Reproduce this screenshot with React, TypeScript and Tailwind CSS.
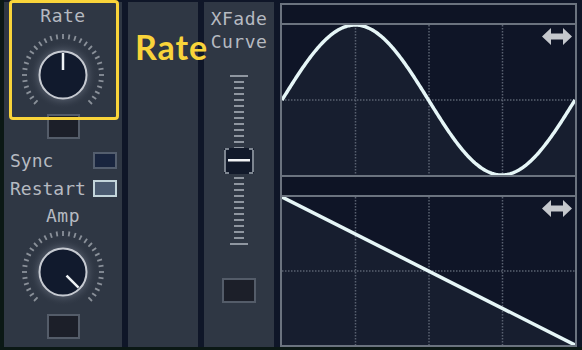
import React from 'react'

const mono = "font-['DejaVu_Sans_Mono','Liberation_Mono',monospace]"

function Knob({ angle, id }: { angle: number; id: string }) {
  const cx = 48
  const cy = 42
  const pt = (a: number, r: number) => {
    const t = (a * Math.PI) / 180
    return [cx + r * Math.sin(t), cy - r * Math.cos(t)]
  }
  const ticks = Array.from({ length: 31 }, (_, i) => -135 + i * 9)
  const [x1, y1] = pt(angle, 5)
  const [x2, y2] = pt(angle, 22)
  return (
    <svg width={96} height={80} className="block">
      <defs>
        <radialGradient id={id} cx="50%" cy="50%" r="50%">
          <stop offset="0.7" stopColor="#4b5361" />
          <stop offset="1" stopColor="#2f3744" stopOpacity="0" />
        </radialGradient>
      </defs>
      <circle cx={cx} cy={cy} r={34} fill={`url(#${id})`} />
      {ticks.map((a) => {
        const [ax, ay] = pt(a, 36)
        const [bx, by] = pt(a, 41)
        return <line key={a} x1={ax} y1={ay} x2={bx} y2={by} stroke="#8a9099" strokeWidth={1.8} />
      })}
      <circle cx={cx} cy={cy} r={23.5} fill="#111a2d" stroke="#c6cad1" strokeWidth={2} />
      <line x1={x1} y1={y1} x2={x2} y2={y2} stroke="#eef2f4" strokeWidth={2.5} />
    </svg>
  )
}

function ValueBox({ w = 33 }: { w?: number }) {
  return (
    <div
      className={`h-[25px] bg-[#1c1f29] border-2 border-[#545c69] ${w === 33 ? 'w-[33px]' : 'w-[34px]'}`}
    />
  )
}

function Arrow() {
  return (
    <path
      d="M260,11.5 L269,3 L269,8.5 L281,8.5 L281,3 L290,11.5 L281,20 L281,14.5 L269,14.5 L269,20 Z"
      fill="#c5c8cd"
    />
  )
}

function Grid({ h }: { h: number }) {
  return (
    <g stroke="#596170" strokeWidth={1.5} strokeDasharray="1.5 1.5">
      <line x1={73.5} y1={0} x2={73.5} y2={h} />
      <line x1={147} y1={0} x2={147} y2={h} />
      <line x1={220.5} y1={0} x2={220.5} y2={h} />
      <line x1={0} y1={h / 2} x2={293} y2={h / 2} />
    </g>
  )
}

function SinePlot() {
  const W = 293
  const H = 150
  const pts: string[] = []
  for (let x = 0; x <= W; x++) {
    const y = H / 2 - 75 * Math.sin((2 * Math.PI * x) / W)
    pts.push(`${x},${y.toFixed(2)}`)
  }
  const curve = 'M' + pts.join(' L')
  return (
    <svg width={W} height={H} className="block">
      <path d={`${curve} L${W},${H} L0,${H} Z`} fill="#171e2f" />
      <Grid h={H} />
      <path d={curve} fill="none" stroke="#e6f6f7" strokeWidth={3.5} />
      <Arrow />
    </svg>
  )
}

function RampPlot() {
  const W = 293
  const H = 148
  return (
    <svg width={W} height={H} className="block">
      <path d={`M0,0 L${W},${H} L0,${H} Z`} fill="#171e2f" />
      <Grid h={H} />
      <line x1={0} y1={0} x2={W} y2={H} stroke="#e6f6f7" strokeWidth={3.5} />
      <Arrow />
    </svg>
  )
}

function Slider() {
  const ticks = Array.from({ length: 29 }, (_, i) => i * 6)
  return (
    <svg width={34} height={172} className="block">
      {ticks.map((y, i) => {
        const wide = i === 0 || i === ticks.length - 1
        return (
          <rect
            key={y}
            x={wide ? 8 : 12}
            y={y}
            width={wide ? 18 : 10}
            height={2}
            fill="#8f96a0"
          />
        )
      })}
      <rect x={2} y={73} width={30} height={26} rx={2} fill="#121a2b" />
      <rect x={2} y={75} width={2} height={22} fill="#7d8590" />
      <rect x={30} y={75} width={2} height={22} fill="#7d8590" />
      <rect x={3} y={73} width={4} height={2} fill="#7d8590" />
      <rect x={27} y={73} width={4} height={2} fill="#7d8590" />
      <rect x={3} y={97} width={4} height={2} fill="#7d8590" />
      <rect x={27} y={97} width={4} height={2} fill="#7d8590" />
      <rect x={6} y={84} width={22} height={2.5} fill="#f2f4f6" />
    </svg>
  )
}

export default function App() {
  return (
    <div className="w-[582px] h-[350px] bg-[#0b1815] pl-[4px] pb-[3px] overflow-hidden">
      <div className="h-full flex gap-[6px] bg-[#0f1628] pt-[2px]">
        {/* LFO controls */}
        <div className={`relative w-[118px] h-full bg-[#2f3744] flex flex-col items-center pt-[2px] text-[18px] text-[#b6bac1] ${mono}`}>
          <div className="absolute left-[5px] top-[-2px] w-[110px] h-[120px] border-[3px] border-[#f9d43a] rounded-[4px] z-10" />
          <div className="h-[24px] leading-[24px] tracking-[0.5px]">Rate</div>
          <div className="mt-[5px]">
            <Knob angle={0} id="k1" />
          </div>
          <div className="mt-[1px]">
            <ValueBox />
          </div>
          <div className="self-stretch mt-[13px] h-[17px] pl-[6px] pr-[5px] flex items-center justify-between leading-[17px]">
            <span>Sync</span>
            <div className="w-[24px] h-[17px] bg-[#19253f] border-2 border-[#545e6e]" />
          </div>
          <div className="self-stretch mt-[11px] h-[17px] pl-[6px] pr-[5px] flex items-center justify-between leading-[17px]">
            <span>Restart</span>
            <div className="w-[24px] h-[17px] bg-[#4a5a70] border-2 border-[#c3d5db]" />
          </div>
          <div className="mt-[7px] h-[24px] leading-[24px] tracking-[0.5px]">Amp</div>
          <div className="mt-[2px]">
            <Knob angle={135} id="k2" />
          </div>
          <div className="mt-[4px]">
            <ValueBox />
          </div>
        </div>

        {/* tooltip panel */}
        <div className="relative w-[70px] h-full bg-[#2f3744]">
          <span className="absolute left-[7px] top-[28px] text-[34px] leading-[34px] font-bold tracking-[1px] text-[#f9d43a] font-['Lato',sans-serif] whitespace-nowrap">
            Rate
          </span>
        </div>

        {/* crossfade */}
        <div className={`w-[70px] h-full bg-[#2f3744] flex flex-col items-center pt-[5px] text-[18px] text-[#b6bac1] ${mono}`}>
          <div className="leading-[23px] tracking-[0.5px] text-center">
            XFade
            <br />
            Curve
          </div>
          <div className="mt-[22px]">
            <Slider />
          </div>
          <div className="mt-[31px]">
            <ValueBox w={34} />
          </div>
        </div>

        {/* shapes */}
        <div className="w-[297px] h-[344px] mt-[1px] border-2 border-[#6b737f] flex flex-col bg-[#0f1527]">
          <div className="h-[18px] bg-[#0e1425]" />
          <div className="h-[2px] bg-[#6b737f]" />
          <div className="h-[150px] overflow-hidden">
            <SinePlot />
          </div>
          <div className="h-[2px] bg-[#6b737f]" />
          <div className="h-[18px] bg-[#0e1425]" />
          <div className="h-[2px] bg-[#6b737f]" />
          <div className="h-[148px] overflow-hidden">
            <RampPlot />
          </div>
        </div>
      </div>
    </div>
  )
}
